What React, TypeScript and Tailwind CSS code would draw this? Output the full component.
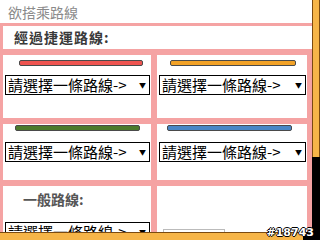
import React from 'react';

const PINK = 'bg-[#f5a3a3]';

const RouteSelect: React.FC<{ className?: string }> = ({ className = '' }) => (
  <div
    className={`flex items-center justify-between h-[20px] border border-black bg-white pl-[2px] pr-[3px] ${className}`}
  >
    <span className="text-[15px] leading-[18px] text-black whitespace-nowrap">請選擇一條路線-&gt;</span>
    <span className="text-[7px] leading-none text-black">▼</span>
  </div>
);

const Bar: React.FC<{ color: string; className?: string }> = ({ color, className = '' }) => (
  <div className={`h-[6px] rounded-[2px] border border-[#4a4a4a] ${color} ${className}`} />
);

const App: React.FC = () => {
  return (
    <div
      className="w-[320px] h-[240px] overflow-hidden bg-white flex relative"
      style={{ fontFamily: '"Noto Sans CJK TC", "Noto Sans", sans-serif' }}
    >
      {/* Main column */}
      <div className="w-[312px] h-[240px] flex flex-col">
        <div className="w-[312px] h-[232px] overflow-hidden">
          {/* Title */}
          <div className="h-[23px] pl-[8px] pt-[3px] text-[14px] leading-[18px] text-[#8a8a8a]">
            欲搭乘路線
          </div>

          {/* Route table */}
          <div className={`${PINK} pl-[3px] pt-[3px]`}>
            <div className="bg-white h-[23px] flex items-center pl-[11px]">
              <span className="text-[14px] font-bold tracking-[1px] text-[#3a3a3a]">經過捷運路線:</span>
            </div>

            <div className="grid grid-cols-[148px_150px] gap-x-[6px] gap-y-[6px] pt-[6px] pr-[5px]">
              {/* Row 1 */}
              <div className="bg-white h-[63px] pt-[5px]">
                <Bar color="bg-[#ee5450]" className="ml-[16px] w-[124px]" />
                <RouteSelect className="mt-[9px] ml-[2px] w-[145px]" />
              </div>
              <div className="bg-white h-[63px] pt-[5px]">
                <Bar color="bg-[#f2a227]" className="ml-[13px] w-[126px]" />
                <RouteSelect className="mt-[9px] ml-[2px] w-[147px]" />
              </div>

              {/* Row 2 */}
              <div className="bg-white h-[56px] pt-[1px]">
                <Bar color="bg-[#4d7a2c]" className="ml-[12px] w-[125px]" />
                <RouteSelect className="mt-[11px] ml-[2px] w-[145px]" />
              </div>
              <div className="bg-white h-[56px] pt-[1px]">
                <Bar color="bg-[#4a86c6]" className="ml-[10px] w-[125px]" />
                <RouteSelect className="mt-[11px] ml-[2px] w-[147px]" />
              </div>

              {/* Row 3 */}
              <div className="bg-white h-[60px] pt-[4px]">
                <div className="pl-[20px] text-[14px] leading-[18px] font-bold text-[#555]">一般路線:</div>
                <RouteSelect className="mt-[14px] ml-[2px] w-[145px]" />
              </div>
              <div className="bg-white h-[60px] pt-[43px]">
                <div className="ml-[6px] w-[62px] h-[20px] border border-[#bbb] bg-white" />
              </div>
            </div>
          </div>
        </div>

        {/* Horizontal scrollbar */}
        <div className="h-[8px] flex">
          <div className="w-[303px] h-[8px] border-t border-[#7a4a10] bg-[#f6b548]" />
          <div className="flex-1 bg-black" />
        </div>
      </div>

      {/* Vertical scrollbar */}
      <div className="w-[8px] h-[240px] flex flex-col">
        <div className="h-[157px] border-x border-[#7a4a10] bg-[#f6b548]" />
        <div className="flex-1 bg-black" />
      </div>

      {/* Counter badge */}
      <div
        className="absolute right-[6px] bottom-[1px] text-[11px] leading-[12px] font-bold text-white"
        style={{
          fontFamily: '"DejaVu Sans", sans-serif',
          textShadow: '1px 0 0 #000, -1px 0 0 #000, 0 1px 0 #000, 0 -1px 0 #000',
        }}
      >
        #18743
      </div>
    </div>
  );
};

export default App;
